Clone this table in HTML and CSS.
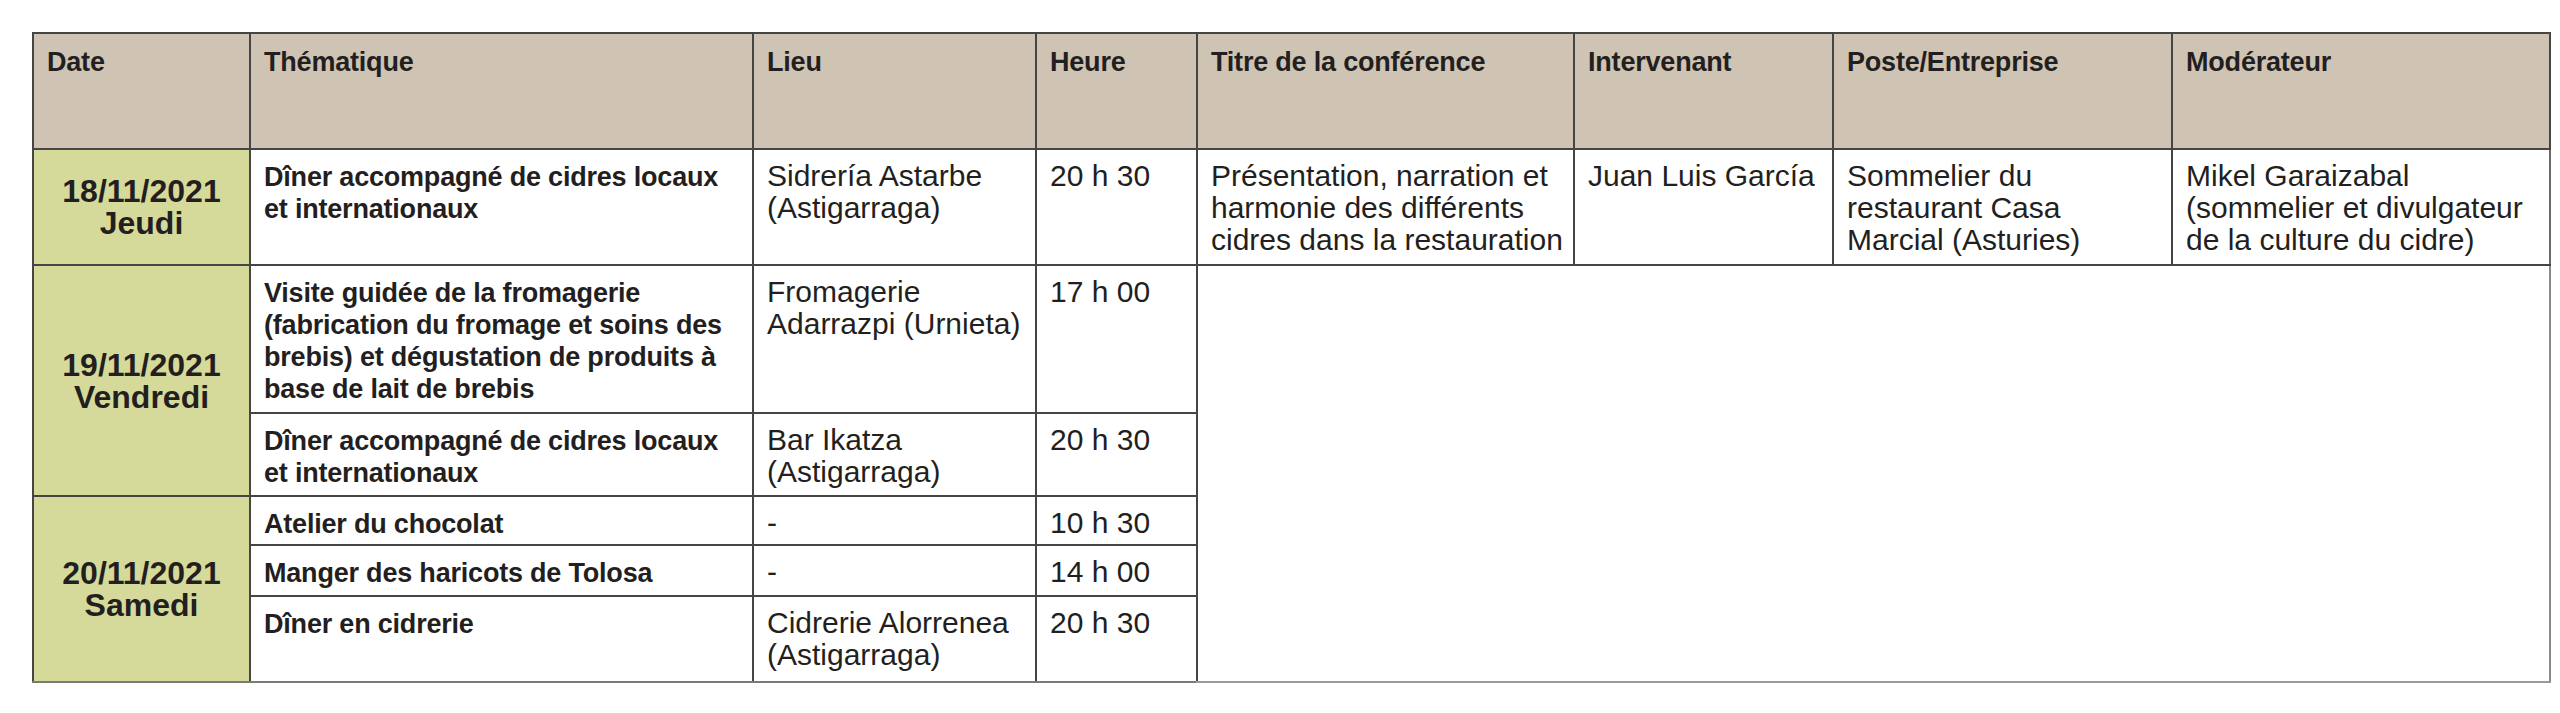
FILE: index.html
```html
<!DOCTYPE html>
<html lang="fr">
<head>
<meta charset="utf-8">
<title>Programme</title>
<link rel="stylesheet" href="styles.css">
</head>
<body>
<table class="prog">
  <colgroup>
    <col class="c-date">
    <col class="c-theme">
    <col class="c-lieu">
    <col class="c-heure">
    <col class="c-titre">
    <col class="c-inter">
    <col class="c-poste">
    <col class="c-mod">
  </colgroup>
  <thead>
    <tr class="r-head">
      <th>Date</th>
      <th>Thématique</th>
      <th>Lieu</th>
      <th>Heure</th>
      <th>Titre de la conférence</th>
      <th>Intervenant</th>
      <th>Poste/Entreprise</th>
      <th>Modérateur</th>
    </tr>
  </thead>
  <tbody>
    <tr class="r1">
      <td class="date">18/11/2021<br>Jeudi</td>
      <td class="theme">Dîner accompagné de cidres locaux<br>et internationaux</td>
      <td>Sidrería Astarbe<br>(Astigarraga)</td>
      <td>20 h 30</td>
      <td>Présentation, narration et<br>harmonie des différents<br>cidres dans la restauration</td>
      <td>Juan Luis García</td>
      <td>Sommelier du<br>restaurant Casa<br>Marcial (Asturies)</td>
      <td class="last">Mikel Garaizabal<br>(sommelier et divulgateur<br>de la culture du cidre)</td>
    </tr>
    <tr class="r2">
      <td class="date" rowspan="2">19/11/2021<br>Vendredi</td>
      <td class="theme">Visite guidée de la fromagerie<br>(fabrication du fromage et soins des<br>brebis) et dégustation de produits à<br>base de lait de brebis</td>
      <td>Fromagerie<br>Adarrazpi (Urnieta)</td>
      <td>17 h 00</td>
      <td class="blank" colspan="4" rowspan="5"></td>
    </tr>
    <tr class="r3">
      <td class="theme">Dîner accompagné de cidres locaux<br>et internationaux</td>
      <td>Bar Ikatza<br>(Astigarraga)</td>
      <td>20 h 30</td>
    </tr>
    <tr class="r4">
      <td class="date bottom" rowspan="3">20/11/2021<br>Samedi</td>
      <td class="theme">Atelier du chocolat</td>
      <td>-</td>
      <td>10 h 30</td>
    </tr>
    <tr class="r5">
      <td class="theme">Manger des haricots de Tolosa</td>
      <td>-</td>
      <td>14 h 00</td>
    </tr>
    <tr class="r6">
      <td class="theme bottom">Dîner en cidrerie</td>
      <td class="bottom">Cidrerie Alorrenea<br>(Astigarraga)</td>
      <td class="bottom">20 h 30</td>
    </tr>
  </tbody>
</table>
</body>
</html>
```

FILE: styles.css
```css
html, body {
  margin: 0;
  background: #ffffff;
}

body {
  padding: 32px 0 0 32px;
  font-family: "Liberation Sans", Arial, sans-serif;
  color: #231f20;
}

.prog {
  border-collapse: collapse;
  table-layout: fixed;
  width: 2519px;
}

.c-date { width: 217px; }
.c-theme { width: 503px; }
.c-lieu { width: 283px; }
.c-heure { width: 161px; }
.c-titre { width: 377px; }
.c-inter { width: 259px; }
.c-poste { width: 339px; }
.c-mod { width: 378px; }

.prog th,
.prog td {
  border: 2px solid #454545;
  padding: 10px 13px 0 13px;
  vertical-align: top;
  text-align: left;
  white-space: nowrap;
  overflow: visible;
  font-size: 30px;
  line-height: 32px;
  font-weight: 400;
}

.prog th {
  background: #cfc4b4;
  font-size: 27px;
  font-weight: 700;
  padding-top: 12px;
  letter-spacing: -0.2px;
}

.prog td.theme {
  font-size: 27px;
  font-weight: 700;
  padding-top: 11px;
  letter-spacing: -0.2px;
}

.prog td.date {
  background: #d5da9b;
  font-size: 32px;
  font-weight: 700;
  text-align: center;
  vertical-align: middle;
  padding: 0 4px;
}

.prog td.blank {
  border-right-color: #8a8a8a;
  border-bottom-color: #9a9a9a;
}

.prog td.last {
  border-right-color: #6a6a6a;
}

.prog td.bottom {
  border-bottom-color: #7a7a7a;
}

.r-head { height: 116px; }
.r1 { height: 116px; }
.r2 { height: 148px; }
.r3 { height: 83px; }
.r4 { height: 49px; }
.r5 { height: 51px; }
.r6 { height: 86px; }
```
